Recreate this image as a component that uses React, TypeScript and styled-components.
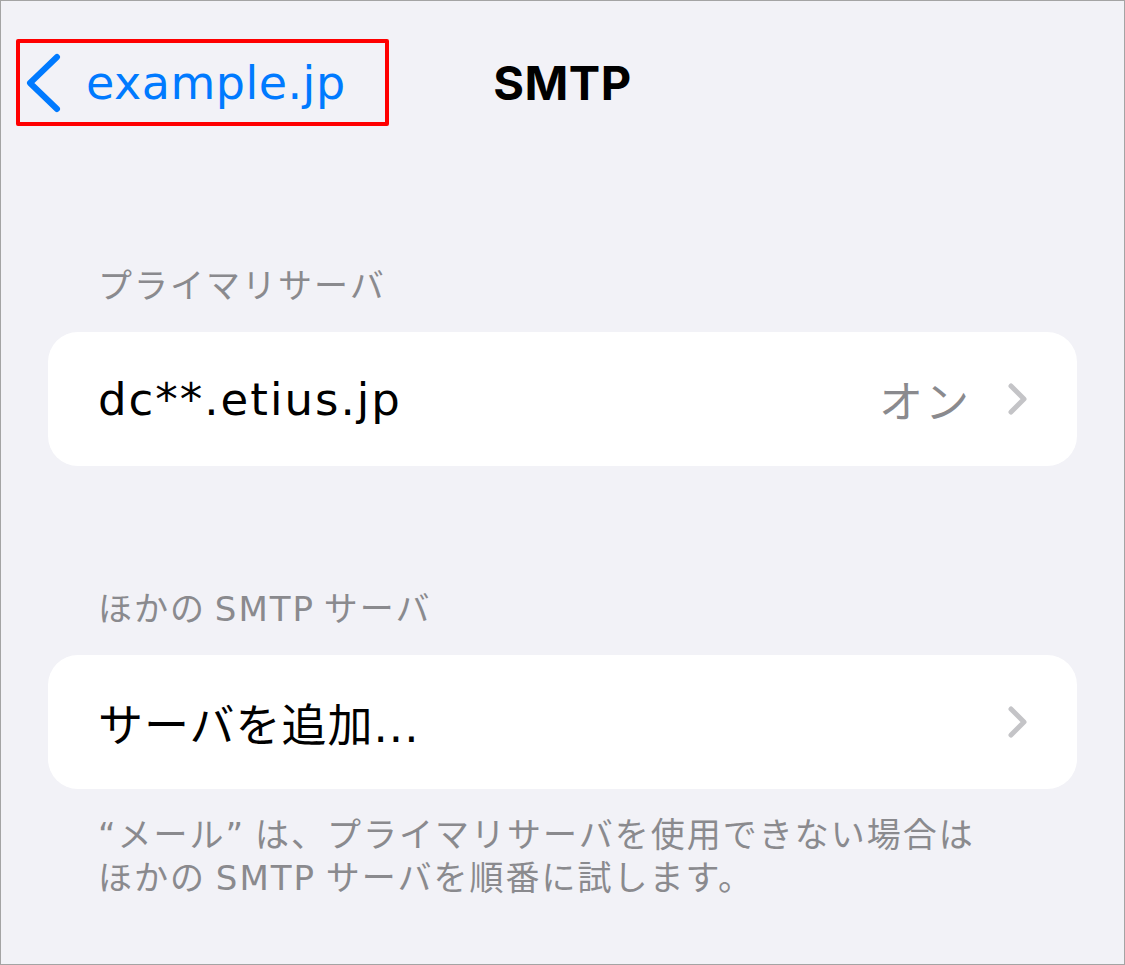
import React from "react";
import styled, { createGlobalStyle } from "styled-components";

const Global = createGlobalStyle`
  html, body { margin: 0; padding: 0; background: #f2f2f7; }
  * { box-sizing: border-box; }
`;

const LATIN = `"DejaVu Sans", "Noto Sans CJK JP", sans-serif`;

const Frame = styled.div`
  width: 1125px;
  height: 965px;
  border: 1px solid #a4a4a4;
  background: #f2f2f7;
  font-family: ${LATIN};
  overflow: hidden;
  display: flex;
  flex-direction: column;
`;

const NavBar = styled.div`
  display: grid;
  grid-template-columns: 1fr auto 1fr;
  align-items: center;
  margin-top: 38px;
  padding: 0 15px;
`;

const BackButton = styled.div`
  justify-self: start;
  display: flex;
  align-items: center;
  gap: 25px;
  width: 373px;
  height: 87px;
  padding-left: 5px;
  border: 4px solid #ff0000;
  border-radius: 2px;
  color: #007aff;
  font-size: 46px;
  letter-spacing: 0.5px;
`;

const Title = styled.div`
  font-family: Inter, "Noto Sans CJK JP", sans-serif;
  font-size: 47px;
  font-weight: 700;
  color: #000;
  letter-spacing: 0.5px;
`;

const Content = styled.div`
  display: flex;
  flex-direction: column;
  padding: 0 47px;
`;

const SectionHeader = styled.div<{ $top: number }>`
  margin-top: ${(p) => p.$top}px;
  padding-left: 50px;
  font-size: 34px;
  letter-spacing: 2px;
  word-spacing: -4px;
  line-height: 44px;
  height: 44px;
  color: #8a8a8e;
`;

const Card = styled.div`
  margin-top: 24px;
  height: 134px;
  background: #fff;
  border-radius: 30px;
  display: flex;
  align-items: center;
  padding: 0 48px 0 50px;
`;

const RowLabel = styled.div<{ $spacing: number }>`
  flex: 1;
  font-size: 45px;
  letter-spacing: ${(p) => p.$spacing}px;
  color: #000;
`;

const RowValue = styled.div`
  font-size: 44px;
  color: #8a8a8e;
  margin-right: 36px;
  letter-spacing: 2px;
`;

const Footer = styled.div`
  margin-top: 25px;
  padding-left: 50px;
  font-size: 34px;
  letter-spacing: 2px;
  word-spacing: -3px;
  line-height: 43px;
  color: #8a8a8e;
`;

const Chevron = () => (
  <svg width="22" height="34" viewBox="0 0 22 34">
    <polyline
      points="4,4 17,17 4,30"
      fill="none"
      stroke="#c4c4c7"
      strokeWidth="5"
      strokeLinecap="round"
      strokeLinejoin="round"
    />
  </svg>
);

const BackChevron = () => (
  <svg width="36" height="60" viewBox="0 0 36 60">
    <polyline
      points="32,4 5,30 32,56"
      fill="none"
      stroke="#007aff"
      strokeWidth="6"
      strokeLinecap="round"
      strokeLinejoin="round"
    />
  </svg>
);

export default function App() {
  return (
    <>
      <Global />
      <Frame>
        <NavBar>
          <BackButton>
            <BackChevron />
            <span>example.jp</span>
          </BackButton>
          <Title>SMTP</Title>
          <div />
        </NavBar>
        <Content>
          <SectionHeader $top={138}>プライマリサーバ</SectionHeader>
          <Card>
            <RowLabel $spacing={2}>dc**.etius.jp</RowLabel>
            <RowValue>オン</RowValue>
            <Chevron />
          </Card>
          <SectionHeader $top={121}>ほかの SMTP サーバ</SectionHeader>
          <Card>
            <RowLabel $spacing={1}>サーバを追加...</RowLabel>
            <Chevron />
          </Card>
          <Footer>
            “メール” は、プライマリサーバを使用できない場合は
            <br />
            ほかの SMTP サーバを順番に試します。
          </Footer>
        </Content>
      </Frame>
    </>
  );
}
